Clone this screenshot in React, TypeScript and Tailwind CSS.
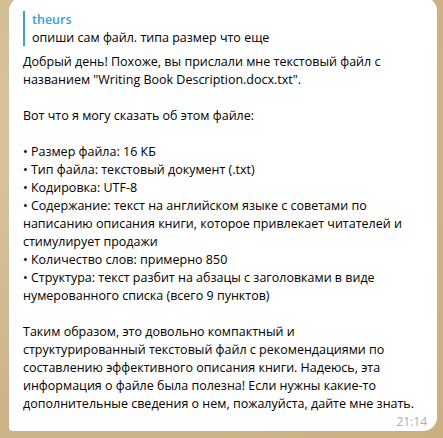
export default function App() {
  const lines: string[] = [
    'Добрый день! Похоже, вы прислали мне текстовый файл с',
    'названием "Writing Book Description.docx.txt".',
    '',
    'Вот что я могу сказать об этом файле:',
    '',
    '• Размер файла: 16 КБ',
    '• Тип файла: текстовый документ (.txt)',
    '• Кодировка: UTF-8',
    '• Содержание: текст на английском языке с советами по',
    'написанию описания книги, которое привлекает читателей и',
    'стимулирует продажи',
    '• Количество слов: примерно 850',
    '• Структура: текст разбит на абзацы с заголовками в виде',
    'нумерованного списка (всего 9 пунктов)',
    '',
    'Таким образом, это довольно компактный и',
    'структурированный текстовый файл с рекомендациями по',
    'составлению эффективного описания книги. Надеюсь, эта',
    'информация о файле была полезна! Если нужны какие-то',
    'дополнительные сведения о нем, пожалуйста, дайте мне знать.',
  ];
  return (
    <div
      className="w-[443px] h-[438px] overflow-hidden bg-[#d2bb91] bg-[radial-gradient(circle_at_20%_30%,#dcc7a0_0%,#cdb488_60%,#c9af82_100%)]"
      style={{ fontFamily: '"Open Sans", "Noto Sans", sans-serif' }}
    >
      <div className="ml-[9px] mt-[-3px] w-[428px] h-[434px] bg-white rounded-t-[14px] rounded-br-[14px] rounded-bl-[4px] pl-[14px] pr-[10px] pt-[14px] relative">
        <div className="flex border-l-2 border-[#3a9ee0] pl-[7px] h-[35px] flex-col justify-center">
          <div className="text-[12.5px] leading-[18px] font-semibold text-[#3a9ee0]">theurs</div>
          <div className="text-[12.5px] leading-[18px] text-black">опиши сам файл. типа размер что еще</div>
        </div>
        <div className="mt-[7px] text-[12.5px] leading-[18px] text-black">
          {lines.map((l, i) => (
            <div key={i} className="h-[18px] whitespace-nowrap">{l}</div>
          ))}
        </div>
        <div className="absolute right-[10px] bottom-[1px] text-[12px] leading-[16px] text-[#a4b0bb]">21:14</div>
      </div>
    </div>
  );
}
